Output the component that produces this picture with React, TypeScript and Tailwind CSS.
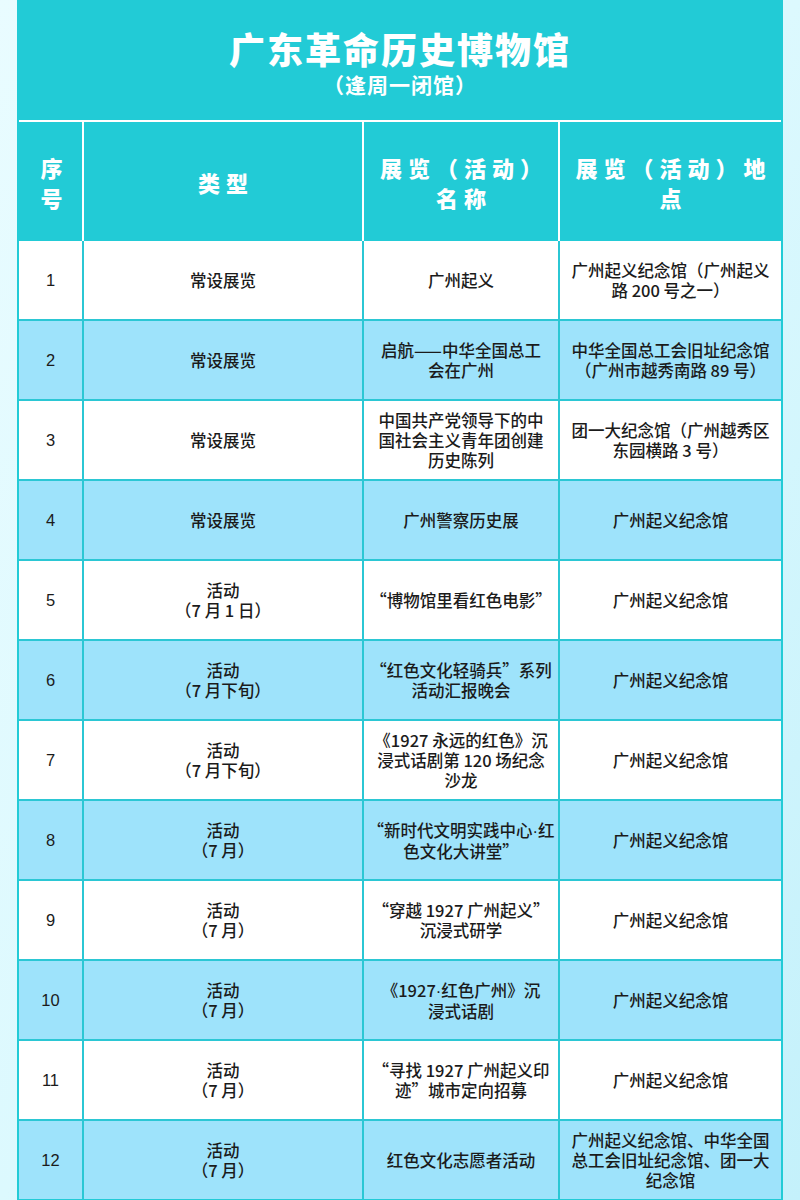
import React from "react";

type Row = { n: string; type: string[]; name: string[]; place: string[] };

const rows: Row[] = [
  { n: "1", type: ["常设展览"], name: ["广州起义"], place: ["广州起义纪念馆（广州起义", "路 200 号之一）"] },
  { n: "2", type: ["常设展览"], name: ["启航——中华全国总工", "会在广州"], place: ["中华全国总工会旧址纪念馆", "（广州市越秀南路 89 号）"] },
  { n: "3", type: ["常设展览"], name: ["中国共产党领导下的中", "国社会主义青年团创建", "历史陈列"], place: ["团一大纪念馆（广州越秀区", "东园横路 3 号）"] },
  { n: "4", type: ["常设展览"], name: ["广州警察历史展"], place: ["广州起义纪念馆"] },
  { n: "5", type: ["活动", "（7 月 1 日）"], name: ["“博物馆里看红色电影”"], place: ["广州起义纪念馆"] },
  { n: "6", type: ["活动", "（7 月下旬）"], name: ["“红色文化轻骑兵”系列", "活动汇报晚会"], place: ["广州起义纪念馆"] },
  { n: "7", type: ["活动", "（7 月下旬）"], name: ["《1927 永远的红色》沉", "浸式话剧第 120 场纪念", "沙龙"], place: ["广州起义纪念馆"] },
  { n: "8", type: ["活动", "（7 月）"], name: ["“新时代文明实践中心·红", "色文化大讲堂”"], place: ["广州起义纪念馆"] },
  { n: "9", type: ["活动", "（7 月）"], name: ["“穿越 1927 广州起义”", "沉浸式研学"], place: ["广州起义纪念馆"] },
  { n: "10", type: ["活动", "（7 月）"], name: ["《1927·红色广州》沉", "浸式话剧"], place: ["广州起义纪念馆"] },
  { n: "11", type: ["活动", "（7 月）"], name: ["“寻找 1927 广州起义印", "迹”城市定向招募"], place: ["广州起义纪念馆"] },
  { n: "12", type: ["活动", "（7 月）"], name: ["红色文化志愿者活动"], place: ["广州起义纪念馆、中华全国", "总工会旧址纪念馆、团一大", "纪念馆"] },
];

const latin = { fontFamily: '"Liberation Sans", sans-serif' };

function Line({ text }: { text: string }) {
  const parts = text.split("·");
  return (
    <div className="whitespace-nowrap">
      {parts.map((p, i) => (
        <React.Fragment key={i}>
          {i > 0 && <span style={latin}>·</span>}
          {p}
        </React.Fragment>
      ))}
    </div>
  );
}

function Lines({ lines }: { lines: string[] }) {
  return (
    <>
      {lines.map((l, i) => (
        <Line key={i} text={l} />
      ))}
    </>
  );
}

export default function App() {
  const font = { fontFamily: '"Liberation Sans", "Noto Sans CJK SC", sans-serif' };
  const cjk = { fontFamily: '"Noto Sans CJK SC", sans-serif' };
  return (
    <div
      className="w-[800px] h-[1200px] overflow-hidden px-[17px] bg-gradient-to-br from-[#e9fcff] via-[#dcf9fe] to-[#c4f1fb]"
      style={font}
    >
      <div className="bg-[#22cbd6] h-full px-[2px]">
        <div className="h-[120px] pt-[26px] text-white text-center" style={cjk}>
          <div className="text-[36px] leading-[44px] font-black tracking-[2px]">广东革命历史博物馆</div>
          <div className="text-[21px] leading-[28px] font-bold tracking-[1px]">（逢周一闭馆）</div>
        </div>
        <div className="h-[2px] bg-white" />
        <div
          className="grid grid-cols-[63px_278px_194px_221px] gap-x-[2px] bg-white h-[119px] text-white font-black text-[22px] leading-[30px] text-center"
          style={cjk}
        >
          <div className="bg-[#22cbd6] flex flex-col items-center justify-center pl-[2px]">
            <div>序</div>
            <div>号</div>
          </div>
          <div className="bg-[#22cbd6] flex items-center justify-center tracking-[6px] pl-[6px]">类型</div>
          <div className="bg-[#22cbd6] flex flex-col items-center justify-center tracking-[6px] pl-[6px]">
            <div className="whitespace-nowrap">展览（活动）</div>
            <div>名称</div>
          </div>
          <div className="bg-[#22cbd6] flex flex-col items-center justify-center tracking-[6px] pl-[6px]">
            <div className="whitespace-nowrap">展览（活动）地</div>
            <div>点</div>
          </div>
        </div>
        <div className="grid grid-cols-[63px_278px_194px_221px] auto-rows-[78px] gap-[2px] bg-[#2bc7d4] text-[#1b1b1b] text-[16.5px] leading-[20px] font-medium text-center">
          {rows.map((r, i) => {
            const bg = i % 2 === 0 ? "bg-white" : "bg-[#9ee3fb]";
            return (
              <React.Fragment key={r.n}>
                <div className={`${bg} flex items-center justify-center`}>{r.n}</div>
                <div className={`${bg} flex flex-col items-center justify-center`} style={cjk}>
                  <Lines lines={r.type} />
                </div>
                <div className={`${bg} flex flex-col items-center justify-center`} style={cjk}>
                  <Lines lines={r.name} />
                </div>
                <div className={`${bg} flex flex-col items-center justify-center`} style={cjk}>
                  <Lines lines={r.place} />
                </div>
              </React.Fragment>
            );
          })}
        </div>
      </div>
    </div>
  );
}
